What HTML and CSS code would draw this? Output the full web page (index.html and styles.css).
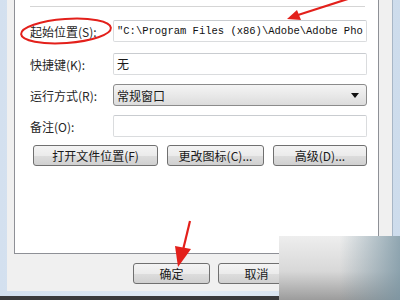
FILE: index.html
```html
<!DOCTYPE html>
<html lang="zh-CN">
<head>
    <meta charset="UTF-8">
    <meta name="viewport" content="width=device-width, initial-scale=1.0">
    <title>快捷方式属性</title>
    <link rel="stylesheet" href="styles.css">
</head>
<body>
    <div class="screen">
        <div class="frame">
            <div class="dialog">
                <div class="panel">
                    <div class="sep"></div>

                    <div class="row r1">
                        <label class="label">起始位置(S):</label>
                        <div class="field mono">"C:\Program Files (x86)\Adobe\Adobe Pho</div>
                    </div>

                    <div class="row r2">
                        <label class="label">快捷键(K):</label>
                        <div class="field">无</div>
                    </div>

                    <div class="row r3">
                        <label class="label">运行方式(R):</label>
                        <div class="select">
                            <span>常规窗口</span>
                            <span class="caret"></span>
                        </div>
                    </div>

                    <div class="row r4">
                        <label class="label">备注(O):</label>
                        <div class="field"></div>
                    </div>

                    <div class="btn-row">
                        <button class="btn w-open">打开文件位置(F)</button>
                        <button class="btn w-icon">更改图标(C)...</button>
                        <button class="btn w-adv">高级(D)...</button>
                    </div>
                </div>

                <div class="footer">
                    <button class="btn w-foot">确定</button>
                    <button class="btn w-foot">取消</button>
                    <button class="btn w-foot">应用(A)</button>
                </div>
            </div>
        </div>
        <div class="taskbar"></div>

        <!-- red annotations drawn over the screenshot -->
        <svg class="marks" width="400" height="300" viewBox="0 0 400 300">
            <ellipse cx="66" cy="31" rx="45" ry="12" transform="rotate(-4 66 31)" fill="none" stroke="#e3201b" stroke-width="2"/>
            <line x1="354" y1="-3" x2="298" y2="15" stroke="#e3201b" stroke-width="2.2"/>
            <polygon points="287,19 297,10 301,20" fill="#e3201b"/>
            <line x1="190" y1="221" x2="183" y2="250" stroke="#e3201b" stroke-width="2.2"/>
            <polygon points="178,267 175,246 191,249" fill="#e3201b"/>
        </svg>

        <div class="watermark"></div>
    </div>
</body>
</html>
```

FILE: styles.css
```css
body {
    margin: 0;
    padding: 0;
    font-family: "Noto Sans CJK SC", "Liberation Sans", sans-serif;
    font-size: 12px;
    color: #1a1a1a;
}

.screen {
    position: relative;
    width: 400px;
    height: 300px;
    overflow: hidden;
    display: flex;
    flex-direction: column;
}

.frame {
    height: 291px;
    padding: 0 7px 5px 7px;
    background: linear-gradient(to right, #d3e0ef, #e3ebf5 50%, #cddcec);
    display: flex;
}

.dialog {
    flex: 1;
    min-width: 0;
    background-color: #f0f0f0;
    border-right: 1px solid #a7b6c6;
    padding: 0 13px 0 7px;
    display: flex;
    flex-direction: column;
}

.panel {
    height: 253px;
    background-color: #fff;
    border: 1px solid #8e9096;
    border-top: none;
    padding: 0 11px 0 15px;
}

.sep {
    margin-top: 6px;
    margin-right: 2px;
    border-top: 1px solid #d5d5d5;
}

.row {
    display: flex;
    align-items: center;
    height: 22px;
}

.r1 { margin-top: 13px; }
.r2 { margin-top: 11px; }
.r3 { margin-top: 9px; }
.r4 { margin-top: 9px; }

.label {
    width: 83px;
    flex-shrink: 0;
    white-space: nowrap;
    color: #262626;
}

.field {
    flex: 1;
    min-width: 0;
    height: 20px;
    line-height: 20px;
    border: 1px solid #dadcde;
    border-top-color: #c9ccd0;
    border-radius: 2px;
    padding: 0 3px;
    overflow: hidden;
    white-space: nowrap;
    background-color: #fff;
}

.mono {
    font-family: "Liberation Mono", "DejaVu Sans Mono", monospace;
    font-size: 10.5px;
    color: #111;
}

.select {
    flex: 1;
    min-width: 0;
    height: 20px;
    border: 1px solid #8b8b8b;
    border-radius: 3px;
    padding: 0 3px;
    display: flex;
    align-items: center;
    justify-content: space-between;
    background: linear-gradient(to bottom, #f4f4f4, #e9e9e9 50%, #dcdcdc);
}

.caret {
    width: 0;
    height: 0;
    margin-right: 4px;
    border-left: 4px solid transparent;
    border-right: 4px solid transparent;
    border-top: 5px solid #111;
}

.btn-row {
    display: flex;
    gap: 9px;
    margin-top: 8px;
    margin-left: 3px;
}

.btn {
    height: 21px;
    padding: 0;
    flex-shrink: 0;
    font-family: "Noto Sans CJK SC", "Liberation Sans", sans-serif;
    font-size: 12px;
    color: #1a1a1a;
    border: 1px solid #707070;
    border-radius: 3px;
    background: linear-gradient(to bottom, #f4f4f4, #ebebeb 50%, #dddddd 51%, #d0d0d0);
}

.w-open { width: 125px; }
.w-icon { width: 97px; }
.w-adv { width: 94px; }
.w-foot { width: 77px; }

.footer {
    display: flex;
    gap: 8px;
    padding: 9px 0 0 119px;
}

.taskbar {
    height: 4px;
    background-color: #3a3a3c;
}

.marks {
    position: absolute;
    left: 0;
    top: 0;
}

.watermark {
    position: absolute;
    left: 279px;
    top: 236px;
    width: 121px;
    height: 64px;
    background:
        linear-gradient(to right, rgba(120, 148, 162, 0) 50%, rgba(120, 148, 162, 0.8) 100%),
        linear-gradient(to bottom, #eeeeee 0%, #d8d8d8 55%, #9c9c9c 100%);
}
```
